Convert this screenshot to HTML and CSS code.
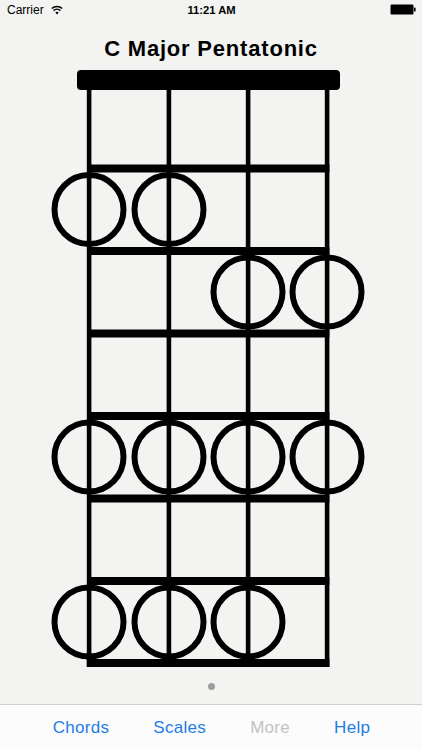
FILE: index.html
```html
<!DOCTYPE html>
<html>
<head>
<meta charset="utf-8">
<link rel="stylesheet" href="styles.css">
</head>
<body>
<div class="screen">
  <div class="status">
    <div class="status-left">
      <span class="carrier">Carrier</span>
      <svg class="wifi" width="12" height="10" viewBox="0 0 12 10">
        <path d="M6 9.6 L4.3 7.6 A2.6 2.6 0 0 1 7.7 7.6 Z" fill="#000"/>
        <path d="M2.6 5.6 A5 5 0 0 1 9.4 5.6" fill="none" stroke="#000" stroke-width="1.5"/>
        <path d="M0.8 3.5 A7.6 7.6 0 0 1 11.2 3.5" fill="none" stroke="#000" stroke-width="1.5"/>
      </svg>
    </div>
    <div class="time">11:21 AM</div>
    <div class="status-right">
      <svg class="battery" width="26" height="11" viewBox="0 0 26 11">
        <rect x="0.5" y="0.5" width="23" height="10" rx="1.2" fill="#000"/>
        <rect x="24" y="3.5" width="1.6" height="4" rx="0.6" fill="#000"/>
      </svg>
    </div>
  </div>

  <h1 class="title">C Major Pentatonic</h1>

  <svg class="board" width="422" height="612" viewBox="0 62 422 612">
    <rect x="77" y="70" width="263" height="20" rx="4" fill="#000"/>
    <g fill="#000">
      <rect x="86.8" y="86" width="4.6" height="581"/>
      <rect x="166.6" y="86" width="4.6" height="581"/>
      <rect x="245.8" y="86" width="4.6" height="581"/>
      <rect x="324.8" y="86" width="4.6" height="581"/>
      <rect x="87" y="164.5" width="242.4" height="8"/>
      <rect x="87" y="247" width="242.4" height="8"/>
      <rect x="87" y="329.5" width="242.4" height="8"/>
      <rect x="87" y="412" width="242.4" height="8"/>
      <rect x="87" y="494.5" width="242.4" height="8"/>
      <rect x="87" y="577" width="242.4" height="8"/>
      <rect x="86.8" y="659" width="242.6" height="8"/>
    </g>
    <g fill="none" stroke="#000" stroke-width="6">
      <circle cx="89" cy="209.5" r="34.5"/>
      <circle cx="169" cy="209.5" r="34.5"/>
      <circle cx="248" cy="292" r="34.5"/>
      <circle cx="327" cy="292" r="34.5"/>
      <circle cx="89" cy="457" r="34.5"/>
      <circle cx="169" cy="457" r="34.5"/>
      <circle cx="248" cy="457" r="34.5"/>
      <circle cx="327" cy="457" r="34.5"/>
      <circle cx="89" cy="622" r="34.5"/>
      <circle cx="169" cy="622" r="34.5"/>
      <circle cx="248" cy="622" r="34.5"/>
    </g>
  </svg>

  <div class="pager"><span class="dot"></span></div>

  <nav class="tabbar">
    <span class="tab">Chords</span>
    <span class="tab">Scales</span>
    <span class="tab tab-off">More</span>
    <span class="tab">Help</span>
  </nav>
</div>
</body>
</html>
```
FILE: styles.css
```css
html, body {
  margin: 0;
  padding: 0;
}
body {
  background: #f3f3f2;
  font-family: "Liberation Sans", Arial, sans-serif;
  color: #000;
}
.screen {
  width: 422px;
  height: 750px;
  display: flex;
  flex-direction: column;
  overflow: hidden;
}
.status {
  height: 20px;
  display: grid;
  grid-template-columns: 1fr auto 1fr;
  align-items: center;
  padding: 0 6px 0 7px;
}
.status-left {
  display: flex;
  align-items: center;
  gap: 7px;
}
.carrier {
  font-size: 12px;
  line-height: 20px;
}
.wifi {
  display: block;
  margin-top: -1px;
}
.time {
  font-size: 11.2px;
  font-weight: bold;
  line-height: 20px;
}
.status-right {
  display: flex;
  justify-content: flex-end;
}
.battery {
  display: block;
  margin-top: -1px;
}
.title {
  margin: 16px 0 0;
  font-size: 22px;
  line-height: 26px;
  font-weight: bold;
  letter-spacing: 0.8px;
  text-align: center;
}
.board {
  display: block;
}
.pager {
  display: flex;
  justify-content: center;
  padding-top: 8.5px;
}
.dot {
  width: 7px;
  height: 7px;
  border-radius: 50%;
  background: #9d9d9d;
}
.tabbar {
  margin-top: auto;
  box-sizing: border-box;
  height: 46px;
  flex-shrink: 0;
  border-top: 1px solid #cfcfcf;
  background: #fcfcfc;
  display: flex;
  justify-content: center;
  align-items: flex-start;
  gap: 44px;
  padding: 13px 0 0 1px;
}
.tab {
  font-size: 17px;
  line-height: 20px;
  letter-spacing: 0.3px;
  color: #1f7de6;
}
.tab-off {
  color: #c2c2c2;
}
```
